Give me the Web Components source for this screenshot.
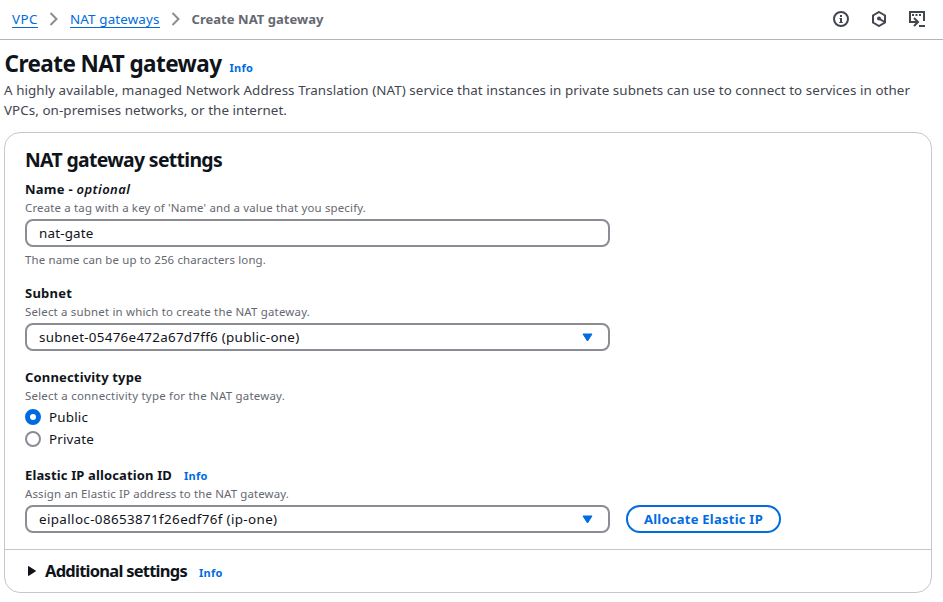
<!DOCTYPE html>
<html lang="en">
<head>
<meta charset="utf-8">
<title>Create NAT gateway</title>
<style>
body { margin: 0; background: #fff; color: #0f141a; font: 13.4px/20px "Noto Sans", "Open Sans", sans-serif; }
</style>
</head>
<body>
<nat-page></nat-page>
<script>
const define = (name, html, ready) => {
  const template = document.createElement('template');
  template.innerHTML = html;
  customElements.define(name, class extends HTMLElement {
    connectedCallback() {
      if (this.shadowRoot) return;
      this.attachShadow({ mode: 'open' }).append(template.content.cloneNode(true));
      if (ready) ready(this, this.shadowRoot);
    }
  });
};

/* One line of text, tracked so that it spans the given measure. */
define('fit-text', `<style>:host{display:inline-block;white-space:pre}</style><slot></slot>`, el => {
  const want = +el.getAttribute('w');
  const natural = el.getBoundingClientRect().width;
  el.style.letterSpacing = ((want - natural) / el.textContent.length) + 'px';
});

define('info-link', `<style>:host{display:inline-block;font-size:11px;line-height:16px;font-weight:700;color:#006ce0}</style><fit-text w="23.5">Info</fit-text>`);

define('crumb-bar', `<style>
:host{display:flex;align-items:center;box-sizing:border-box;height:40px;padding:0 18px 1px 12px;border-bottom:1px solid #b4b4bb}
.link{color:#006ce0;line-height:16px;border-bottom:1px solid #006ce0;margin-top:1px}
svg{display:block;fill:none;stroke:#424650}
.sep{margin:0 11px;stroke:#8c8c94}
.now{color:#656871;font-weight:700;font-size:13px}
.tools{margin-left:auto;display:flex;gap:22px}
</style>
<fit-text class="link" w="26">VPC</fit-text>
<svg class="sep" width="10" height="14" viewBox="0 0 10 14" stroke-width="2"><path d="M1.500 1l6 6-6 6"/></svg>
<fit-text class="link" w="89.5">NAT gateways</fit-text>
<svg class="sep" width="10" height="14" viewBox="0 0 10 14" stroke-width="2"><path d="M1.500 1l6 6-6 6"/></svg>
<fit-text class="now" w="132">Create NAT gateway</fit-text>
<div class="tools">
<svg width="16" height="16" viewBox="0 0 16 16" stroke-width="2"><circle cx="8" cy="8" r="7"/><path d="M8 4v2M8 7v5" /><path d="M6.500 7.500H8M6.200 11.500h3.600" stroke-width="1"/></svg>
<svg width="16" height="16" viewBox="0 0 16 16" stroke-width="2"><path d="M8 1l6 3.500v7L8 15l-6-3.500v-7z"/><circle cx="8" cy="7.500" r="2" fill="#424650" stroke="none"/><path d="M8 7.500l5.500 3.500"/></svg>
<svg width="16" height="16" viewBox="0 0 16 16" stroke-width="2"><path d="M1 10V1h14v9M0 11h8M5 7l4 4-4 4M10 15h6"/><path d="M3 4h2M6.500 4h2M10 4h2"/></svg>
</div>`);

define('page-heading', `<style>
:host{display:block;padding:9px 5px 0}
.title{display:flex;align-items:baseline;gap:8px;height:31px;margin-left:-.5px;line-height:30px;font-size:22.500px;font-weight:700}
p{margin:0 0 0 -1px;color:#424650}
p fit-text{display:block;width:max-content}
</style>
<div class="title"><fit-text w="217">Create NAT gateway</fit-text><info-link></info-link></div>
<p><fit-text w="906">A highly available, managed Network Address Translation (NAT) service that instances in private subnets can use to connect to services in other</fit-text><fit-text w="283">VPCs, on-premises networks, or the internet.</fit-text></p>`);

define('form-field', `<style>
:host{display:block;width:585px}
.label{display:flex;align-items:baseline;height:21px;font-size:13px;font-weight:700}
.hint{height:19px;line-height:16px;font-size:11.450px;color:#656871}
::slotted(info-link){margin-left:12px}
</style><div class="label"><slot name="label"></slot></div><div class="hint"><slot name="hint"></slot></div><slot></slot>`);

define('text-box', `<style>
:host{display:flex;align-items:center;justify-content:space-between;box-sizing:border-box;height:28px;padding:0 14px 0 12px;border:2px solid #8c8c94;border-radius:8px}
svg{display:none}:host([menu]) svg{display:block}
</style><slot></slot><svg width="12" height="9" viewBox="0 0 12 9"><path d="M1 1h9L5.500 8z" fill="#006ce0" stroke="#006ce0" stroke-linejoin="round"/></svg>`);

define('radio-option', `<style>
:host{display:flex;align-items:center;gap:8px;height:22px;position:relative;top:-1px}
i{box-sizing:border-box;width:16px;height:16px;border:2px solid #8c8c94;border-radius:50%}
:host([checked]) i{border:5px solid #006ce0}
</style><i></i><slot></slot>`);

define('pill-button', `<style>:host{display:flex;align-items:center;justify-content:center;box-sizing:border-box;width:155px;height:28px;border:2px solid #006ce0;border-radius:14px;color:#006ce0;font-size:13px;font-weight:700}</style><slot></slot>`);

define('settings-card', `<style>
:host{display:block;box-sizing:border-box;width:928px;height:461px;margin:12px 0 0 4px;border:1px solid #c6c6cd;border-radius:16px}
.main{box-sizing:border-box;height:417px;padding:14px 20px 0;border-bottom:1px solid #c6c6cd}
.foot{display:flex;align-items:baseline;height:42px;padding:8px 0 0 22px;box-sizing:border-box}
</style><div class="main"><slot></slot></div><div class="foot"><slot name="footer"></slot></div>`);

define('nat-page', `<style>
:host{display:block}
h2{margin:0;height:32px;font-size:19.400px;line-height:26px;font-weight:700}
form-field{height:84px}
.name{height:104px}
.radio{height:98px}
.help{font-size:11.450px;line-height:16px;color:#656871;margin-top:5px}
.row{display:flex;align-items:flex-start;gap:16px}
pill-button{margin-top:40px}
em{font-weight:600}
.more{font-size:16.500px;line-height:26px;font-weight:700;margin:0 12px 0 8px}
</style>
<crumb-bar></crumb-bar>
<page-heading></page-heading>
<settings-card>
<h2><fit-text w="197">NAT gateway settings</fit-text></h2>
<form-field class="name"><fit-text slot="label" w="51.500">Name - </fit-text><em slot="label"><fit-text w="54">optional</fit-text></em><fit-text slot="hint" w="341">Create a tag with a key of 'Name' and a value that you specify.</fit-text>
<text-box><fit-text w="54.500">nat-gate</fit-text></text-box><div class="help"><fit-text w="241">The name can be up to 256 characters long.</fit-text></div></form-field>
<form-field><fit-text slot="label" w="47">Subnet</fit-text><fit-text slot="hint" w="285">Select a subnet in which to create the NAT gateway.</fit-text>
<text-box menu><fit-text w="260.500">subnet-05476e472a67d7ff6 (public-one)</fit-text></text-box></form-field>
<form-field class="radio"><fit-text slot="label" w="117">Connectivity type</fit-text><fit-text slot="hint" w="260">Select a connectivity type for the NAT gateway.</fit-text>
<radio-option checked><fit-text w="39">Public</fit-text></radio-option><radio-option><fit-text w="45">Private</fit-text></radio-option></form-field>
<div class="row"><form-field><fit-text slot="label" w="147">Elastic IP allocation ID</fit-text><info-link slot="label"></info-link><fit-text slot="hint" w="264">Assign an Elastic IP address to the NAT gateway.</fit-text>
<text-box menu><fit-text w="238.500">eipalloc-08653871f26edf76f (ip-one)</fit-text></text-box></form-field><pill-button><fit-text w="119">Allocate Elastic IP</fit-text></pill-button></div>
<svg slot="footer" width="10" height="12" viewBox="0 0 10 12"><path d="M1.500 1.500v9L8.500 6z" fill="#0f141a" stroke="#0f141a" stroke-linejoin="round"/></svg>
<fit-text slot="footer" class="more" w="142">Additional settings</fit-text><info-link slot="footer"></info-link>
</settings-card>`);
</script>
</body>
</html>
